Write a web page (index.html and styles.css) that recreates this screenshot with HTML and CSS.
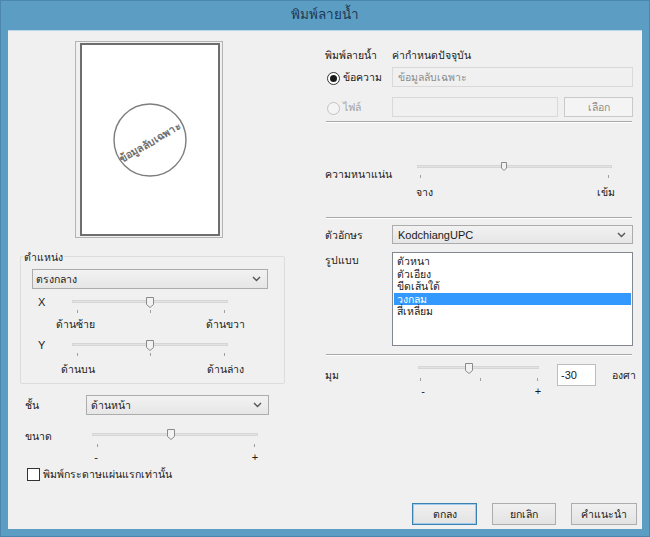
FILE: index.html
```html
<!DOCTYPE html>
<html lang="th">
<head>
<meta charset="utf-8">
<title>พิมพ์ลายน้ำ</title>
<link rel="stylesheet" href="styles.css">
</head>
<body>
<div class="window">
  <div class="titlebar">พิมพ์ลายน้ำ</div>
  <div class="client">
    <div class="main">
      <div class="left">
        <div class="preview">
          <div class="page">
            <svg class="wm" width="136" height="189" viewBox="0 0 136 189">
              <circle cx="68" cy="95" r="36" fill="none" stroke="#7d7d7d" stroke-width="1.4"/>
              <text x="68" y="101" transform="rotate(-30 68 97)" text-anchor="middle" class="wm-text">ข้อมูลลับเฉพาะ</text>
            </svg>
          </div>
        </div>

        <div class="group">
          <span class="legend">ตำแหน่ง</span>
          <div class="combo combo-pos"><span>ตรงกลาง</span><svg class="chev" width="9" height="6" viewBox="0 0 9 6"><path d="M1 1 L4.5 4.5 L8 1" fill="none" stroke="#555" stroke-width="1.4"/></svg></div>
          <div class="srow xrow">
            <span class="axis">X</span>
            <div class="slider s-pos">
              <div class="track"></div>
              <i class="tick" style="left:5px"></i><i class="tick" style="left:78px"></i><i class="tick" style="left:152px"></i>
              <svg class="thumb thumb-l" style="left:74px" width="8" height="11" viewBox="0 0 8 11"><path d="M0.5 0.5 H7.5 V7.5 L4 10.5 L0.5 7.5 Z" fill="#f2f2f2" stroke="#8a8a8a"/></svg>
            </div>
          </div>
          <div class="ticklabels tl-x"><span>ด้านซ้าย</span><span>ด้านขวา</span></div>
          <div class="srow yrow">
            <span class="axis">Y</span>
            <div class="slider s-pos">
              <div class="track"></div>
              <i class="tick" style="left:5px"></i><i class="tick" style="left:78px"></i><i class="tick" style="left:152px"></i>
              <svg class="thumb thumb-l" style="left:74px" width="8" height="11" viewBox="0 0 8 11"><path d="M0.5 0.5 H7.5 V7.5 L4 10.5 L0.5 7.5 Z" fill="#f2f2f2" stroke="#8a8a8a"/></svg>
            </div>
          </div>
          <div class="ticklabels tl-y"><span>ด้านบน</span><span>ด้านล่าง</span></div>
        </div>

        <div class="layer-row">
          <span class="lbl lbl-layer">ชั้น</span>
          <div class="combo combo-layer"><span>ด้านหน้า</span><svg class="chev" width="9" height="6" viewBox="0 0 9 6"><path d="M1 1 L4.5 4.5 L8 1" fill="none" stroke="#555" stroke-width="1.4"/></svg></div>
        </div>

        <div class="size-row">
          <span class="lbl lbl-size">ขนาด</span>
          <div class="slider s-size">
            <div class="track"></div>
            <i class="tick" style="left:5px"></i><i class="tick" style="left:162px"></i>
            <svg class="thumb thumb-l" style="left:75px" width="8" height="11" viewBox="0 0 8 11"><path d="M0.5 0.5 H7.5 V7.5 L4 10.5 L0.5 7.5 Z" fill="#f2f2f2" stroke="#8a8a8a"/></svg>
          </div>
        </div>
        <div class="ticklabels tl-size"><span>-</span><span>+</span></div>

        <label class="check"><span class="box"></span><span>พิมพ์กระดาษแผ่นแรกเท่านั้น</span></label>
      </div>

      <div class="right">
        <div class="rrow head-row">
          <span class="rlbl">พิมพ์ลายน้ำ</span>
          <span>ค่ากำหนดปัจจุบัน</span>
        </div>
        <div class="rrow radio-row">
          <span class="rlbl radio-lbl"><span class="radio on"></span>ข้อความ</span>
          <div class="textbox tb-text">ข้อมูลลับเฉพาะ</div>
        </div>
        <div class="rrow file-row">
          <span class="rlbl radio-lbl disabled"><span class="radio off"></span>ไฟล์</span>
          <div class="textbox tb-file"></div>
          <div class="btn btn-dis">เลือก</div>
        </div>
        <div class="sep sep1"></div>

        <div class="density">
          <span class="dlbl">ความหนาแน่น</span>
          <div class="scol">
            <div class="slider s-den">
              <div class="track"></div>
              <i class="tick" style="left:3px"></i><i class="tick" style="left:191px"></i>
              <svg class="thumb thumb-s" style="left:84px" width="6" height="9" viewBox="0 0 6 9"><path d="M0.5 0.5 H5.5 V6 L3 8.5 L0.5 6 Z" fill="#f2f2f2" stroke="#8a8a8a"/></svg>
            </div>
            <div class="ticklabels tl-den"><span>จาง</span><span>เข้ม</span></div>
          </div>
        </div>
        <div class="sep sep2"></div>

        <div class="rrow font-row">
          <span class="rlbl">ตัวอักษร</span>
          <div class="combo combo-font"><span>KodchiangUPC</span><svg class="chev" width="9" height="6" viewBox="0 0 9 6"><path d="M1 1 L4.5 4.5 L8 1" fill="none" stroke="#555" stroke-width="1.4"/></svg></div>
        </div>
        <div class="style-row">
          <span class="rlbl">รูปแบบ</span>
          <ul class="listbox">
            <li>ตัวหนา</li>
            <li>ตัวเอียง</li>
            <li>ขีดเส้นใต้</li>
            <li class="sel">วงกลม</li>
            <li>สี่เหลี่ยม</li>
          </ul>
        </div>
        <div class="sep sep3"></div>

        <div class="angle-row">
          <span class="alb">มุม</span>
          <div class="scol acol">
            <div class="slider s-ang">
              <div class="track"></div>
              <i class="tick" style="left:2px"></i><i class="tick" style="left:62px"></i><i class="tick" style="left:119px"></i>
              <svg class="thumb thumb-l" style="left:47px" width="8" height="11" viewBox="0 0 8 11"><path d="M0.5 0.5 H7.5 V7.5 L4 10.5 L0.5 7.5 Z" fill="#f2f2f2" stroke="#8a8a8a"/></svg>
            </div>
            <div class="ticklabels tl-ang"><span>-</span><span>+</span></div>
          </div>
          <div class="numbox">-30</div>
          <span class="deg">องศา</span>
        </div>
      </div>
    </div>

    <div class="buttons">
      <div class="btn btn-def">ตกลง</div>
      <div class="btn">ยกเลิก</div>
      <div class="btn">คำแนะนำ</div>
    </div>
  </div>
</div>
</body>
</html>
```

FILE: styles.css
```css
* { box-sizing: border-box; }
html, body { margin: 0; padding: 0; }
body {
  width: 650px;
  height: 537px;
  overflow: hidden;
  font-family: "Liberation Sans", Tahoma, "DejaVu Sans", sans-serif;
  font-size: 10.5px;
  color: #1a1a1a;
}
.window {
  width: 650px;
  height: 537px;
  background: #5c9dc3;
  border: 1px solid #4a86ad;
  display: flex;
  flex-direction: column;
}
.titlebar {
  height: 29px;
  line-height: 28px;
  text-align: center;
  font-size: 13.5px;
  color: #1c3955;
}
.client {
  margin: 0 7px;
  height: 499px;
  background: #f0f0f0;
  border-top: 1px solid #b9d6ea;
  display: flex;
  flex-direction: column;
}
.main { display: flex; height: 472px; }

/* left column */
.left {
  width: 310px;
  display: flex;
  flex-direction: column;
  align-items: flex-start;
}
.preview {
  margin: 10px 0 0 67px;
  width: 148px;
  height: 197px;
  border: 1px solid #b4b4b4;
  padding: 1px 2px 1px 4px;
}
.page {
  width: 100%;
  height: 100%;
  background: #fff;
  border: 2px solid #6e6e6e;
}
.wm { display: block; }
.wm-text {
  font-size: 10.4px;
  font-weight: bold;
  fill: #6f6f6f;
}

.group {
  position: relative;
  margin: 18px 0 0 12px;
  width: 265px;
  height: 128px;
  border: 1px solid #dcdcdc;
  border-radius: 2px;
  padding: 12px 0 0 11px;
}
.legend {
  position: absolute;
  top: -7px;
  left: 2px;
  padding: 0 1px;
  line-height: 14px;
  background: #f0f0f0;
}
.combo {
  display: flex;
  align-items: center;
  justify-content: space-between;
  height: 20px;
  border: 1px solid #acacac;
  background: linear-gradient(#f2f2f2, #e6e6e6);
  padding: 0 6px 0 3px;
  line-height: 18px;
}
.combo-pos { width: 236px; }
.combo-layer { width: 183px; padding-left: 4px; }
.combo-font { width: 241px; padding-left: 5px; height: 19px; font-size: 11px; }
.chev { display: block; }

.srow { display: flex; align-items: center; height: 20px; }
.xrow { margin-top: 3px; }
.yrow { margin-top: 3px; }
.axis { margin-left: 6px; width: 34px; line-height: 16px; font-size: 11px; }

.slider { position: relative; height: 20px; }
.track {
  position: absolute;
  left: 0;
  right: 0;
  top: 8px;
  height: 3px;
  background: #e3e3e3;
  border: 1px solid #d6d6d6;
}
.tick {
  position: absolute;
  top: 18px;
  width: 1px;
  height: 3px;
  background: #a0a0a0;
}
.thumb { position: absolute; top: 5px; display: block; }
.s-pos { width: 156px; }

.ticklabels {
  display: flex;
  justify-content: space-between;
  line-height: 16px;
}
.ticklabels span { width: 50px; text-align: center; }
.tl-x { margin: 4px 0 0 18px; width: 200px; }
.tl-y { margin: 6px 0 0 21px; width: 197px; }

.layer-row {
  display: flex;
  align-items: center;
  margin: 11px 0 0 17px;
}
.lbl { line-height: 16px; }
.lbl-layer { width: 61px; }

.size-row {
  display: flex;
  align-items: flex-start;
  margin: 9px 0 0 17px;
}
.lbl-size { width: 67px; margin-top: 4px; }
.s-size { width: 166px; height: 24px; }
.s-size .track { top: 9px; }
.s-size .thumb { top: 5px; }
.s-size .tick { top: 20px; }
.tl-size { margin: 2px 0 0 78px; width: 179px; line-height: 14px; font-size: 11px; }
.tl-size span { width: 20px; }

.check {
  display: flex;
  align-items: center;
  margin: 4px 0 0 19px;
  line-height: 13px;
}
.box {
  width: 13px;
  height: 13px;
  border: 1px solid #333;
  background: #fff;
  margin-right: 3px;
}

/* right column */
.right {
  width: 324px;
  padding: 16px 0 0 7px;
}
.rrow { display: flex; align-items: center; }
.rlbl { width: 67px; line-height: 16px; flex: none; }
.head-row { height: 16px; line-height: 16px; }
.radio-row { margin-top: 4px; height: 20px; }
.file-row { margin-top: 10px; height: 20px; }
.radio-lbl { display: flex; align-items: center; }
.radio {
  width: 13px;
  height: 13px;
  border-radius: 50%;
  margin: 2px 3px 0 2px;
  position: relative;
}
.radio.on { border: 1px solid #333; background: #fff; }
.radio.on::after {
  content: "";
  position: absolute;
  left: 2px;
  top: 2px;
  width: 7px;
  height: 7px;
  border-radius: 50%;
  background: #1a1a1a;
}
.radio.off { border: 1px solid #c3c3c3; background: #f4f4f4; }
.disabled { color: #a3a3a3; }

.textbox {
  height: 20px;
  border: 1px solid #d9d9d9;
  background: #f0f0f0;
  color: #8d8d8d;
  padding-left: 5px;
  line-height: 18px;
}
.tb-text { width: 241px; }
.tb-file { width: 166px; }
.btn {
  display: flex;
  align-items: center;
  justify-content: center;
  height: 22px;
  border: 1px solid #adadad;
  background: linear-gradient(#f0f0f0, #e3e3e3);
}
.btn-dis {
  width: 69px;
  height: 20px;
  margin-left: 6px;
  border-color: #c9c9c9;
  background: #f4f4f4;
  color: #8d8d8d;
}

.sep {
  width: 306px;
  margin-left: 1px;
  border-top: 1px solid #a9a9a9;
  border-bottom: 1px solid #fff;
}
.sep1 { margin-top: 4px; }
.sep2 { margin-top: 17px; }
.sep3 { margin-top: 8px; }

.density { display: flex; align-items: flex-start; margin-top: 34px; }
.dlbl { width: 92px; margin-top: 9px; line-height: 16px; }
.scol { display: flex; flex-direction: column; }
.s-den { width: 195px; }
.tl-den { margin: 7px 0 0 -8px; width: 212px; }
.tl-den span { width: 30px; }

.font-row { margin-top: 6px; height: 19px; }
.style-row { display: flex; align-items: flex-start; margin-top: 8px; }
.listbox {
  list-style: none;
  margin: 0;
  width: 241px;
  height: 94px;
  border: 1px solid #828790;
  background: #fff;
  padding: 2px 1px 0 1px;
}
.listbox li { height: 12.5px; line-height: 12.5px; padding-left: 3px; }
.listbox li.sel { background: #3399ff; color: #fff; }

.angle-row { display: flex; align-items: flex-start; margin-top: 8px; }
.alb { width: 93px; margin-top: 3px; line-height: 16px; }
.acol { margin-top: -4px; }
.s-ang { width: 121px; }
.s-ang .track { top: 6px; }
.s-ang .thumb { top: 3px; }
.tl-ang { margin: 4px 0 0 -5px; width: 135px; line-height: 14px; font-size: 11px; }
.tl-ang span { width: 20px; }
.numbox {
  margin-left: 9px;
  width: 39px;
  height: 22px;
  border: 1px solid #bdbdbd;
  background: #fff;
  line-height: 20px;
  padding-left: 3px;
  font-size: 11px;
}
.deg { margin-left: 16px; line-height: 22px; }

.buttons {
  display: flex;
  justify-content: flex-end;
  gap: 15px;
  padding-right: 5px;
}
.buttons .btn:nth-child(1) { width: 65px; }
.buttons .btn:nth-child(2) { width: 64px; }
.buttons .btn:nth-child(3) { width: 66px; }
.btn-def { border-color: #3c7fb1; box-shadow: inset 0 0 0 1px #9fcbed; }
```
